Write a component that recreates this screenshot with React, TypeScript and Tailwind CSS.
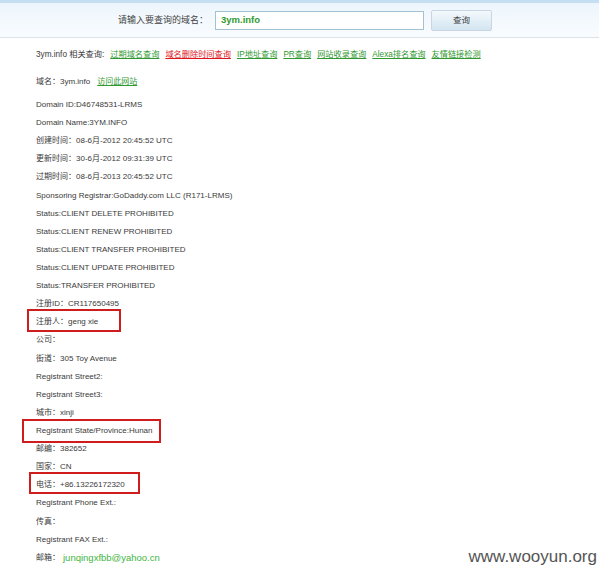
import React from "react"

const font = { fontFamily: '"Liberation Sans", Arial, "Noto Sans CJK SC", sans-serif' }

type Row = { text: string; box?: { left: number; top: number; w: number; h: number } }

const rows: Row[] = [
  { text: "Domain ID:D46748531-LRMS" },
  { text: "Domain Name:3YM.INFO" },
  { text: "创建时间：08-6月-2012 20:45:52 UTC" },
  { text: "更新时间：30-6月-2012 09:31:39 UTC" },
  { text: "过期时间：08-6月-2013 20:45:52 UTC" },
  { text: "Sponsoring Registrar:GoDaddy.com LLC (R171-LRMS)" },
  { text: "Status:CLIENT DELETE PROHIBITED" },
  { text: "Status:CLIENT RENEW PROHIBITED" },
  { text: "Status:CLIENT TRANSFER PROHIBITED" },
  { text: "Status:CLIENT UPDATE PROHIBITED" },
  { text: "Status:TRANSFER PROHIBITED" },
  { text: "注册ID：CR117650495" },
  { text: "注册人：geng xie", box: { left: -9, top: -4, w: 94, h: 23 } },
  { text: "公司：" },
  { text: "街道：305 Toy Avenue" },
  { text: "Registrant Street2:" },
  { text: "Registrant Street3:" },
  { text: "城市：xinji" },
  { text: "Registrant State/Province:Hunan", box: { left: -14, top: -3, w: 139, h: 24 } },
  { text: "邮编：382652" },
  { text: "国家：CN" },
  { text: "电话：+86.13226172320", box: { left: -7, top: -4, w: 111, h: 22 } },
  { text: "Registrant Phone Ext.:" },
  { text: "传真：" },
  { text: "Registrant FAX Ext.:" },
]

const links = [
  { label: "过期域名查询", red: false },
  { label: "域名删除时间查询", red: true },
  { label: "IP地址查询", red: false },
  { label: "PR查询", red: false },
  { label: "网站收录查询", red: false },
  { label: "Alexa排名查询", red: false },
  { label: "友情链接检测", red: false },
]

export default function App() {
  return (
    <div className="relative w-full h-[570px] overflow-hidden bg-white text-[#3a3a3a]" style={font}>
      {/* search header */}
      <div className="border-t-[3px] border-[#c6def1] border-b border-b-[#dce3e8] h-[38px] bg-gradient-to-b from-[#edf5fc] to-[#f9fcfe]">
        <div className="flex items-start pl-[118px] pt-[7px]">
          <span className="w-[92px] text-[9px] leading-[21px] text-[#444]">请输入要查询的域名：</span>
          <div className="ml-[5px] mt-[1px] w-[209px] h-[19px] border border-[#a2c2d4] bg-white flex items-center pl-[5px]">
            <span className="text-[9.5px] font-bold text-[#2f9a2f]">3ym.info</span>
          </div>
          <button className="ml-[7px] w-[61px] h-[21px] border border-[#c7d6e2] rounded-[2px] bg-gradient-to-b from-[#f4f9fc] to-[#d3e5f1] text-[8.5px] text-[#444] flex items-center justify-center">
            查询
          </button>
        </div>
      </div>

      <div className="pl-[36px] text-[8px]">
        {/* related queries */}
        <div className="mt-[8px] h-[18px] flex items-center whitespace-nowrap text-[8.2px]">
          <span className="mr-[3px]">3ym.info 相关查询:</span>
          {links.map((l) => (
            <a
              key={l.label}
              className={`ml-[3px] mr-[3px] underline ${l.red ? "text-[#e0151c]" : "text-[#2f982f]"}`}
            >
              {l.label}
            </a>
          ))}
        </div>

        {/* domain */}
        <div className="mt-[9px] h-[18px] flex items-center">
          <span>域名：3ym.info</span>
          <a className="ml-[7px] underline text-[#2f982f]">访问此网站</a>
        </div>

        <div className="mt-[5px] flex flex-col">
          {rows.map((r, i) => (
            <div key={i} className="relative h-[18.12px] flex items-center whitespace-nowrap">
              <span>{r.text}</span>
              {r.box && (
                <div
                  className="absolute border-2 border-[#cf1d1d]"
                  style={{ left: r.box.left, top: r.box.top, width: r.box.w, height: r.box.h }}
                />
              )}
            </div>
          ))}
          <div className="h-[18.12px] flex items-center whitespace-nowrap">
            <span>邮箱：</span>
            <span className="ml-[3px] text-[9.5px] text-[#3fb53f]">junqingxfbb@yahoo.cn</span>
          </div>
        </div>
      </div>

      {/* watermark */}
      <div className="absolute right-[2px] bottom-[1px] text-[17px] text-[#555]">www.wooyun.org</div>
    </div>
  )
}
